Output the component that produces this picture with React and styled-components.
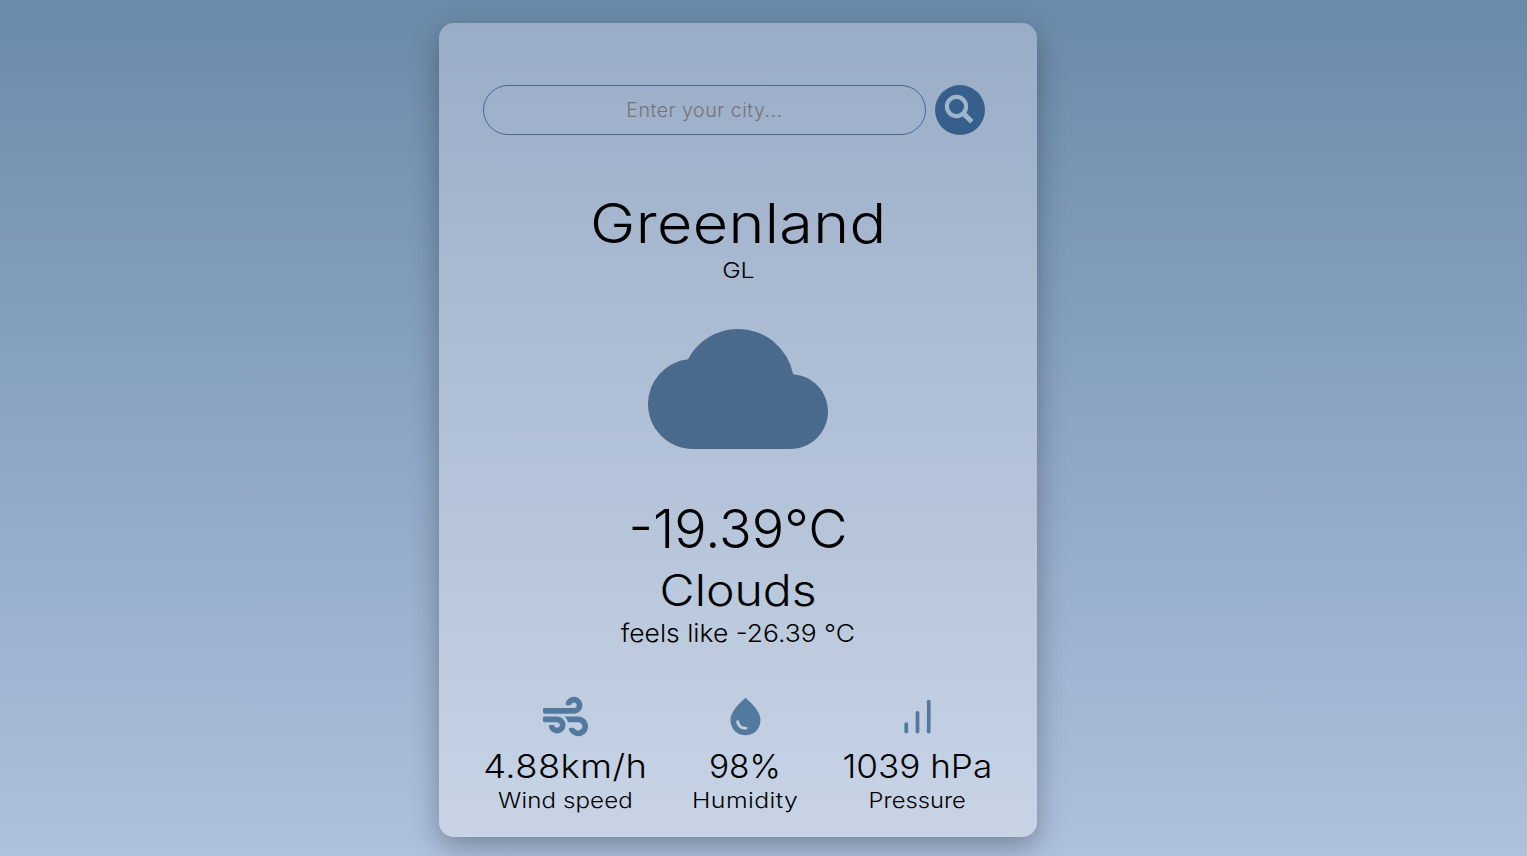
import React from 'react';
import styled, { createGlobalStyle } from 'styled-components';
import { MdCloud, MdWaterDrop } from 'react-icons/md';
import { FaWind } from 'react-icons/fa';
import { FiBarChart } from 'react-icons/fi';

const GlobalStyle = createGlobalStyle`
  * { box-sizing: border-box; }
  html, body, #root { height: 100%; }
  body {
    margin: 0;
    overflow: hidden;
    font-family: Inter, 'Open Sans', sans-serif;
    font-weight: 300;
    color: #000;
  }
`;

const Page = styled.main`
  height: 100%;
  padding: 23px 51px 0 0;
  display: flex;
  justify-content: center;
  align-items: flex-start;
  background: linear-gradient(180deg, #6a8aa9, #aec1de);
`;

const Card = styled.section`
  width: 598px;
  height: 814px;
  padding-top: 62px;
  display: flex;
  flex-direction: column;
  align-items: center;
  border-radius: 15px;
  background: linear-gradient(180deg, #9aadc7, #c8d4e6);
  box-shadow: 0 10px 28px rgba(0, 0, 0, 0.3);
`;

const SearchForm = styled.form`
  width: 510px;
  display: flex;
  gap: 9px;
`;

const SearchInput = styled.input`
  width: 443px;
  height: 50px;
  padding: 0;
  border: 1px solid #456a91;
  border-radius: 25px;
  background: transparent;
  text-align: center;
  font: 340 19.6px Inter, sans-serif;
  letter-spacing: 0.5px;
  &::placeholder { color: #757575; opacity: 1; }
`;

const SearchButton = styled.button`
  width: 50px;
  height: 50px;
  padding: 0;
  display: grid;
  place-items: center;
  border: 0;
  border-radius: 50%;
  background: #36608b;
  color: #a0b4cb;
`;

const Line = styled.div`
  font-size: ${(p) => p.$size}px;
  line-height: ${(p) => p.$line}px;
  letter-spacing: ${(p) => p.$spacing || 0}px;
  font-weight: ${(p) => p.$weight || 300};
  margin-top: ${(p) => p.$top || 0}px;
  margin-right: ${(p) => -(p.$spacing || 0)}px;
  transform: scaleX(${(p) => p.$stretch || 1});
  white-space: nowrap;
`;

const CloudIcon = styled(MdCloud)`
  margin-top: 16px;
  flex: none;
  color: #496a8c;
`;

const Stats = styled.div`
  width: 508px;
  margin-top: 45px;
  display: flex;
  gap: 46px;
`;

const Stat = styled.div`
  width: ${(p) => p.$width}px;
  display: flex;
  flex-direction: column;
  align-items: center;
  svg { color: #54799f; margin-bottom: 7px; }
`;

const SearchIcon = () => (
  <svg width="50" height="50" viewBox="0 0 50 50" fill="none" stroke="currentColor" strokeWidth="4.1">
    <circle cx="21.5" cy="21.5" r="9.6" />
    <path d="M28 28L36.8 36.8" strokeWidth="4.9" />
  </svg>
);

const stats = [
  { icon: FaWind, value: '4.88km/h', label: 'Wind speed', width: 162, vx: 1.12, vs: 0.4, lx: 1.115, ls: 0.1 },
  { icon: MdWaterDrop, value: '98%', label: 'Humidity', width: 106, vx: 1.03, vs: 0, lx: 1.15, ls: 0.35 },
  { icon: FiBarChart, value: '1039 hPa', label: 'Pressure', width: 147, vx: 1.08, vs: 0, lx: 1.1, ls: 0 },
];

export default function App() {
  return (
    <>
      <GlobalStyle />
      <Page>
        <Card>
          <SearchForm onSubmit={(e) => e.preventDefault()}>
            <SearchInput placeholder="Enter your city..." aria-label="City" />
            <SearchButton aria-label="Search"><SearchIcon /></SearchButton>
          </SearchForm>
          <Line $size={54.5} $line={68} $top={54} $stretch={1.12} $spacing={0.3}>Greenland</Line>
          <Line $size={22} $line={26} $stretch={1.13}>GL</Line>
          <CloudIcon size={180} />
          <Line $size={54} $line={68} $top={16}>-19.39°C</Line>
          <Line $size={43} $line={54} $stretch={1.12}>Clouds</Line>
          <Line $size={24.6} $line={32} $stretch={1.075} $weight={320}>feels like -26.39 °C</Line>
          <Stats>
            {stats.map(({ icon: Icon, value, label, width, vx, vs, lx, ls }) => (
              <Stat key={label} $width={width}>
                <Icon size={45} />
                <Line $size={32.5} $line={42} $stretch={vx} $spacing={vs}>{value}</Line>
                <Line $size={21.6} $line={28} $top={-2} $stretch={lx} $spacing={ls} $weight={320}>{label}</Line>
              </Stat>
            ))}
          </Stats>
        </Card>
      </Page>
    </>
  );
}
